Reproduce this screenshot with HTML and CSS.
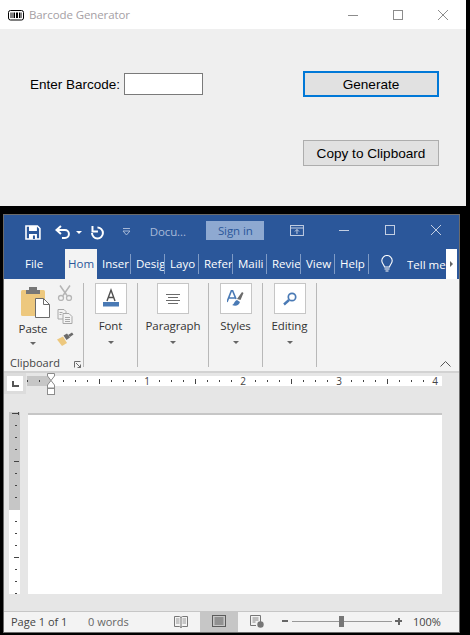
FILE: index.html
```html
<!DOCTYPE html>
<html lang="en">
<head>
<meta charset="utf-8">
<title>Barcode Generator and Word</title>
<link rel="stylesheet" href="styles.css">
</head>
<body>
<section class="form-window">
  <header class="form-title">
    <svg class="form-icon" width="16" height="12" viewBox="0 0 16 12"><rect x="0.5" y="1.5" width="15" height="9.5" rx="2" fill="#fff" stroke="#000"/><path d="M3 3.500v5.500M5 3.500v5.500M6.500 3.500v5.500M8.500 3.500v5.500M9.500 3.500v5.500M11.500 3.500v5.500M13 3.500v5.500" stroke="#000" stroke-width="1"/></svg>
    <span class="form-title-text">Barcode Generator</span>
    <div class="win-controls">
      <span class="win-btn"><svg width="12" height="12" viewBox="0 0 12 12"><path d="M1 6.500h10" stroke="#8c8c8c"/></svg></span>
      <span class="win-btn"><svg width="12" height="12" viewBox="0 0 12 12"><rect x="1.500" y="1.500" width="9" height="9" fill="none" stroke="#8c8c8c"/></svg></span>
      <span class="win-btn"><svg width="12" height="12" viewBox="0 0 12 12"><path d="M1 1l10 10M11 1L1 11" stroke="#8c8c8c"/></svg></span>
    </div>
  </header>
  <div class="form-body">
    <div class="barcode-row">
      <label class="form-label" for="code">Enter Barcode:</label>
      <input class="form-input" id="code" type="text">
    </div>
    <div class="form-buttons">
      <button class="form-btn is-default">Generate</button>
      <button class="form-btn">Copy to Clipboard</button>
    </div>
  </div>
</section>

<section class="word-window">
  <header class="word-title">
    <svg class="qat-save" width="16" height="15" viewBox="0 0 16 15"><path d="M1 1h11.500L15 3.500V14H1z" fill="none" stroke="#fff" stroke-width="1.600"/><rect x="4" y="1" width="8" height="5" fill="#fff"/><rect x="4" y="9" width="8" height="5" fill="#fff"/><rect x="8" y="10.500" width="2" height="3.500" fill="#2b579a"/></svg>
    <svg class="qat-undo" width="16" height="14" viewBox="0 0 16 14"><path d="M6 1L1.500 5 6 9" fill="none" stroke="#fff" stroke-width="2"/><path d="M2 5h8a4 4 0 0 1 0 8H7" fill="none" stroke="#fff" stroke-width="2"/></svg>
    <span class="qat-arrow"></span>
    <svg class="qat-redo" width="15" height="15" viewBox="0 0 15 15"><path d="M7.500 2.500a5.500 5.500 0 1 1-5.500 5.500" fill="none" stroke="#fff" stroke-width="2"/><path d="M2.500 1v5.500H8" fill="none" stroke="#fff" stroke-width="2"/></svg>
    <svg class="qat-custom" width="9" height="8" viewBox="0 0 9 8"><path d="M1 .5h7M1 3l3.500 4L8 3z" fill="none" stroke="#a9bad8"/></svg>
    <span class="doc-name">Docu...</span>
    <span class="sign-in">Sign in</span>
    <svg class="ribbon-display" width="14" height="11" viewBox="0 0 14 11"><rect x=".5" y=".5" width="13" height="10" fill="none" stroke="#c3cfe3"/><path d="M.5 3h13M7 9V4.500M5 6.500l2-2 2 2" fill="none" stroke="#c3cfe3"/></svg>
    <div class="word-controls">
      <span class="word-ctl"><svg width="12" height="12" viewBox="0 0 12 12"><path d="M1 6.500h10" stroke="#c3cfe3"/></svg></span>
      <span class="word-ctl"><svg width="12" height="12" viewBox="0 0 12 12"><rect x="1.500" y="1.500" width="9" height="9" fill="none" stroke="#c3cfe3"/></svg></span>
      <span class="word-ctl"><svg width="12" height="12" viewBox="0 0 12 12"><path d="M1 1l10 10M11 1L1 11" stroke="#c3cfe3"/></svg></span>
    </div>
  </header>

  <nav class="tabs">
    <span class="tab tab-file">File</span>
    <span class="tab tab-home">Hom</span>
    <span class="tab">Inser</span>
    <span class="tab">Desig</span>
    <span class="tab">Layo</span>
    <span class="tab">Refer</span>
    <span class="tab">Maili</span>
    <span class="tab">Revie</span>
    <span class="tab">View</span>
    <span class="tab">Help</span>
    <svg class="bulb" width="12" height="18" viewBox="0 0 12 18"><path d="M3.500 12C3 9.500.8 8.500.8 5.700a5.200 5.200 0 0 1 10.400 0c0 2.800-2.200 3.800-2.700 6.300z" fill="none" stroke="#fff" stroke-width="1.100"/><path d="M3.500 14h5M4.500 16h3" stroke="#fff" stroke-width="1.100"/></svg>
    <span class="tell-me">Tell me</span>
    <span class="tab-scroll"><span class="tab-scroll-arrow"></span></span>
  </nav>

  <div class="ribbon">
    <div class="rgroup rgroup-clip">
      <div class="clip-main">
        <svg class="paste-icon" width="29" height="32" viewBox="0 0 29 32"><rect x="0" y="3" width="24" height="26" rx="1.500" fill="#edc87e"/><rect x="8" y="0" width="8" height="3" fill="#777"/><rect x="5" y="3" width="14" height="4" fill="#777"/><path d="M14.500 11.500h8l6 6v13h-14z" fill="#fff" stroke="#6b6b6b"/><path d="M22.500 11.500v6h6" fill="none" stroke="#6b6b6b"/></svg>
        <span class="rlabel paste-label">Paste</span>
        <span class="drop"></span>
      </div>
      <div class="clip-tools">
        <svg width="16" height="16" viewBox="0 0 16 16"><path d="M3 .5l7 10M13 .5l-7 10" stroke="#b5b5b5" stroke-width="1.500"/><circle cx="4" cy="13" r="2.500" fill="none" stroke="#b5b5b5" stroke-width="1.300"/><circle cx="12" cy="13" r="2.500" fill="none" stroke="#b5b5b5" stroke-width="1.300"/></svg>
        <svg width="16" height="15" viewBox="0 0 16 15"><path d="M1 .5h6l2 2V10H1z" fill="#f3f3f3" stroke="#a8a8a8"/><path d="M6 4.500h6l3 3v7H6z" fill="#f3f3f3" stroke="#a8a8a8"/><path d="M8 8.500h5M8 10.500h5M8 12.500h5M2.500 3.500h3M2.500 5.500h2" stroke="#a8a8a8"/></svg>
        <svg width="17" height="15" viewBox="0 0 17 15"><path d="M0 7.500l6-3 4 6.500-5 3z" fill="#edc87e"/><path d="M6.500 3.500l3 4.500 3.500-2.500-3-4z" fill="#6b6b6b"/><path d="M11 3l4-2.500 1.500 2L13 5z" fill="#6b6b6b"/></svg>
      </div>
      <div class="group-name">
        <span>Clipboard</span>
        <svg width="7" height="7" viewBox="0 0 7 7"><path d="M.5 6.500V.5h6M2 2l4.500 4.500M6.500 3.500v3h-3" fill="none" stroke="#6b6b6b"/></svg>
      </div>
    </div>
    <div class="rgroup rgroup-font">
      <span class="rbox"><svg width="18" height="23" viewBox="0 0 18 23"><path d="M5 14L9 3l4 11M6.300 10.500h5.400" fill="none" stroke="#505050" stroke-width="1.400"/><rect x="1" y="15" width="16" height="4.500" fill="#4a7ab5"/></svg></span>
      <span class="rlabel">Font</span>
      <span class="drop"></span>
    </div>
    <div class="rgroup rgroup-para">
      <span class="rbox"><svg width="14" height="10" viewBox="0 0 14 10"><path d="M0 .5h14M2 3.500h10M0 6.500h14M2 9.500h10" stroke="#6b6b6b"/></svg></span>
      <span class="rlabel">Paragraph</span>
      <span class="drop"></span>
    </div>
    <div class="rgroup rgroup-styles">
      <span class="rbox"><svg width="17" height="17" viewBox="0 0 17 17"><path d="M0 12L4.500 .5h1L9 9M2 8h6" fill="none" stroke="#4a7ab5" stroke-width="1.600"/><path d="M10 9l5-7 1.500 1-3 7z" fill="#6b6b6b"/><path d="M5 15c2 0 2-4 5-5l3 2c-1 3-4 5-8 3z" fill="#4a7ab5"/></svg></span>
      <span class="rlabel">Styles</span>
      <span class="drop"></span>
    </div>
    <div class="rgroup rgroup-edit">
      <span class="rbox"><svg width="14" height="14" viewBox="0 0 14 14"><circle cx="9" cy="5" r="3.700" fill="none" stroke="#4a7ab5" stroke-width="1.700"/><path d="M6 8l-5 4.500" stroke="#4a7ab5" stroke-width="2.400"/></svg></span>
      <span class="rlabel">Editing</span>
      <span class="drop"></span>
    </div>
    <svg class="collapse" width="11" height="6" viewBox="0 0 11 6"><path d="M.5 5.500l5-5 5 5" fill="none" stroke="#555"/></svg>
  </div>

  <div class="ruler-row">
    <span class="tab-stop"><svg width="7" height="6" viewBox="0 0 7 6"><path d="M1 0v5h6" fill="none" stroke="#555" stroke-width="2"/></svg></span>
    <svg class="h-ruler" width="415" height="21" viewBox="0 0 415 21">
      <rect y="0" width="415" height="10" fill="#fff"/>
      <rect y="0" width="24" height="10" fill="#c6c6c6"/>
      <g fill="#444"><rect x="0" y="4" width="1" height="2"/><rect x="12" y="4" width="1" height="2"/>
      <rect x="36" y="4" width="1" height="2"/><rect x="48" y="4" width="1" height="2"/><rect x="60" y="4" width="1" height="2"/><rect x="72" y="3" width="1" height="5"/><rect x="84" y="4" width="1" height="2"/><rect x="96" y="4" width="1" height="2"/><rect x="108" y="4" width="1" height="2"/>
      <rect x="132" y="4" width="1" height="2"/><rect x="144" y="4" width="1" height="2"/><rect x="156" y="4" width="1" height="2"/><rect x="168" y="3" width="1" height="5"/><rect x="180" y="4" width="1" height="2"/><rect x="192" y="4" width="1" height="2"/><rect x="204" y="4" width="1" height="2"/>
      <rect x="228" y="4" width="1" height="2"/><rect x="240" y="4" width="1" height="2"/><rect x="252" y="4" width="1" height="2"/><rect x="264" y="3" width="1" height="5"/><rect x="276" y="4" width="1" height="2"/><rect x="288" y="4" width="1" height="2"/><rect x="300" y="4" width="1" height="2"/>
      <rect x="324" y="4" width="1" height="2"/><rect x="336" y="4" width="1" height="2"/><rect x="348" y="4" width="1" height="2"/><rect x="360" y="3" width="1" height="5"/><rect x="372" y="4" width="1" height="2"/><rect x="384" y="4" width="1" height="2"/><rect x="396" y="4" width="1" height="2"/></g>
      <g class="ruler-num"><text x="120" y="9" text-anchor="middle">1</text><text x="216" y="9" text-anchor="middle">2</text><text x="312" y="9" text-anchor="middle">3</text><text x="408" y="9" text-anchor="middle">4</text></g>
      <path d="M20.500 -2.500h7v2.500l-3.500 4.500 3.500 4.500v3h-7v-3l3.500-4.500-3.500-4.500z" fill="#fff" stroke="#8c8c8c"/>
      <rect x="20.500" y="12.500" width="7" height="6" fill="#fff" stroke="#8c8c8c"/>
    </svg>
  </div>

  <div class="doc-row">
    <svg class="v-ruler" width="11" height="182" viewBox="0 0 11 182">
      <rect width="11" height="182" fill="#fff"/>
      <rect width="11" height="98" fill="#c6c6c6"/>
      <g fill="#444"><rect x="3" y="1" width="6" height="1"/><rect x="9" y="0" width="1" height="3"/>
      <rect x="6" y="13" width="2" height="1"/><rect x="6" y="25" width="2" height="1"/><rect x="6" y="37" width="2" height="1"/><rect x="5" y="49" width="5" height="1"/><rect x="6" y="61" width="2" height="1"/><rect x="6" y="73" width="2" height="1"/><rect x="6" y="85" width="2" height="1"/>
      <rect x="6" y="109" width="2" height="1"/><rect x="6" y="121" width="2" height="1"/><rect x="6" y="133" width="2" height="1"/><rect x="5" y="145" width="5" height="1"/><rect x="6" y="157" width="2" height="1"/><rect x="6" y="169" width="2" height="1"/><rect x="6" y="181" width="2" height="1"/></g>
    </svg>
    <div class="page"></div>
  </div>

  <footer class="status">
    <span class="st-page">Page 1 of 1</span>
    <span class="st-words">0 words</span>
    <svg class="st-read" width="14" height="13" viewBox="0 0 14 13"><path d="M.5 1.500h5l1.500 1 1.500-1h5v10h-5l-1.500 1-1.500-1h-5zM7 2.500v10" fill="none" stroke="#777"/><path d="M2 4h3.500M2 6h3.500M2 8h3.500M8.500 4H12M8.500 6H12M8.500 8H12" stroke="#999"/></svg>
    <span class="st-print"><svg width="14" height="12" viewBox="0 0 14 12"><rect x=".5" y=".5" width="13" height="11" fill="none" stroke="#5c5c5c"/><path d="M2.500 3h9M2.500 5h9M2.500 7h9M2.500 9h9" stroke="#5c5c5c"/></svg></span>
    <svg class="st-web" width="14" height="13" viewBox="0 0 14 13"><path d="M.5 .5h10V7M.5 .5v10H6" fill="none" stroke="#777"/><path d="M2.500 3h6M2.500 5h6M2.500 7h3" stroke="#888"/><circle cx="10.500" cy="9.500" r="3.200" fill="#777"/></svg>
    <span class="zoom-minus"></span>
    <span class="zoom-track"><span class="zoom-thumb"></span></span>
    <span class="zoom-plus"></span>
    <span class="zoom-pct">100%</span>
  </footer>
</section>
</body>
</html>
```

FILE: styles.css
```css
* { box-sizing: border-box; }
html, body { margin: 0; padding: 0; }
body { width: 470px; height: 635px; background: #000; overflow: hidden; display: flex; flex-direction: column; align-items: flex-start; }

/* Barcode form window */
.form-window { width: 466px; height: 206px; background: #efefef; display: flex; flex-direction: column; }
.form-title { height: 29px; background: #fff; display: flex; align-items: center; padding-left: 8px; }
.form-title-text { margin-left: 5px; font: 11.5px "Open Sans", sans-serif; letter-spacing: -.1px; color: #a5a0a5; }
.win-controls { margin-left: auto; display: flex; padding-right: 1px; }
.win-btn { width: 45px; height: 29px; display: flex; align-items: center; justify-content: center; }
.form-body { flex: 1; display: flex; justify-content: space-between; align-items: flex-start; padding: 42px 27px 0 30px; }
.barcode-row { display: flex; align-items: center; height: 26px; gap: 6px; }
.form-label { width: 88px; white-space: nowrap; font: 13.5px "Liberation Sans", sans-serif; color: #000; }
.form-input { width: 79px; height: 22px; background: #fff; border: 1px solid #7a7a7a; padding: 0; margin: 0; }
.form-buttons { display: flex; flex-direction: column; gap: 43px; }
.form-btn { width: 136px; height: 26px; padding: 0; margin: 0; background: #e1e1e1; border: 1px solid #adadad; font: 13.6px "Liberation Sans", sans-serif; color: #000; }
.form-btn.is-default { border: 2px solid #0078d7; }

/* Word window */
.word-window { width: 457px; height: 419px; margin: 8px 0 0 3px; border: 1px solid #6b6b6b; background: #e6e6e6; display: flex; flex-direction: column; }
.word-title { height: 34px; flex: none; background: #2b579a; display: flex; align-items: center; }
.qat-save { margin-left: 21px; }
.qat-undo { margin-left: 14px; }
.qat-arrow { margin-left: 5px; width: 0; height: 0; border: 3px solid transparent; border-top: 3px solid #fff; border-bottom: 0; }
.qat-redo { margin-left: 8px; }
.qat-custom { margin-left: 17px; }
.doc-name { margin: 0 0 2px 19px; width: 38px; font: 11.5px "Open Sans", sans-serif; letter-spacing: -.1px; color: #a9bad8; }
.sign-in { align-self: flex-start; margin: 6px 0 0 19px; width: 58px; height: 19px; background: #8ea9d1; color: #2b579a; font: 11.5px/19px "Open Sans", sans-serif; letter-spacing: -.1px; text-align: center; }
.ribbon-display { margin: 0 0 3px 26px; }
.word-controls { display: flex; margin-left: 17px; align-self: flex-start; }
.word-ctl { width: 46px; height: 30px; display: flex; align-items: center; justify-content: center; }

.tabs { height: 30px; flex: none; background: #2b579a; display: flex; align-items: center; }
.tab { width: 34px; height: 20px; flex: none; overflow: hidden; white-space: nowrap; font: 11.5px/20px "Open Sans", sans-serif; color: #fff; padding-left: 5px; border-right: 1px solid #7f9bc6; }
.tab-file { width: 61px; padding-left: 21px; border-right: 0; }
.tab-home { width: 32px; height: 30px; background: #f3f3f3; color: #2b579a; line-height: 30px; padding-left: 3px; border-right: 0; }
.bulb { margin-left: 12px; flex: none; }
.tell-me { margin-left: 14px; width: 39px; overflow: hidden; white-space: nowrap; font: 11.5px "Open Sans", sans-serif; color: #fff; flex: none; }
.tab-scroll { width: 11px; height: 30px; background: #fff; display: flex; align-items: center; justify-content: center; flex: none; }
.tab-scroll-arrow { width: 0; height: 0; border: 3px solid transparent; border-left: 3px solid #666; border-right: 0; }

.ribbon { height: 94px; flex: none; background: #f3f3f3; border-bottom: 2px solid #d2d2d2; display: flex; position: relative; padding-top: 4px; }
.rgroup { height: 84px; flex: none; border-right: 1px solid #b8b8b8; display: flex; flex-direction: column; align-items: center; }
.rgroup-clip { width: 80px; display: block; position: relative; }
.rgroup-font { width: 54px; }
.rgroup-para { width: 71px; }
.rgroup-styles { width: 54px; }
.rgroup-edit { width: 54px; }
.rbox { width: 32px; height: 31px; flex: none; background: #fff; border: 1px solid #c6c6c6; display: flex; align-items: center; justify-content: center; }
.rlabel { font: 11.5px/16px "Open Sans", sans-serif; letter-spacing: -.1px; color: #333; margin-top: 4px; white-space: nowrap; }
.drop { width: 0; height: 0; margin-top: 7px; border: 3px solid transparent; border-top: 3px solid #666; border-bottom: 0; }
.clip-main { width: 50px; margin-left: 6px; display: flex; flex-direction: column; align-items: center; }
.paste-icon { margin-top: 4px; }
.paste-label { margin: 2px 4px 0 0; }
.clip-main .drop { margin: 5px 5px 0 0; }
.clip-tools { position: absolute; left: 53px; top: 2px; display: flex; flex-direction: column; gap: 8px; }
.group-name { position: absolute; left: 6px; right: 2px; top: 73px; display: flex; justify-content: space-between; align-items: center; font: 11px/14px "Open Sans", sans-serif; color: #444; }
.group-name svg { margin-top: 3px; }
.collapse { position: absolute; right: 8px; bottom: 4px; }

.ruler-row { height: 39px; flex: none; position: relative; padding: 3px 0 0 23px; }
.tab-stop { position: absolute; left: 0; top: 0; width: 22px; height: 21px; background: #fff; border: 3px solid #dcdcdc; display: flex; align-items: center; justify-content: center; }
.h-ruler { display: block; overflow: visible; }
.ruler-num text { font: 10px "Open Sans", sans-serif; fill: #444; }

.doc-row { flex: 1; display: flex; align-items: flex-start; padding-left: 5px; min-height: 0; }
.v-ruler { flex: none; }
.page { width: 414px; height: 181px; margin: 1px 0 0 8px; background: #fff; border-top: 2px solid #c6c6c6; }

.status { height: 21px; flex: none; background: #f3f3f3; border-top: 1px solid #c6c6c6; padding-bottom: 2px; display: flex; align-items: center; font: 11px "Open Sans", sans-serif; color: #444; }
.st-page { margin-left: 7px; width: 77px; }
.st-words { width: 86px; color: #666; }
.st-read { flex: none; }
.st-print { align-self: flex-start; width: 38px; height: 20px; background: #c6c6c6; margin-left: 12px; padding-bottom: 2px; display: flex; align-items: center; justify-content: center; }
.st-web { margin-left: 12px; flex: none; }
.zoom-minus { margin-left: 18px; width: 6px; height: 2px; background: #666; }
.zoom-track { margin-left: 4px; width: 100px; height: 1px; background: #999; position: relative; }
.zoom-thumb { position: absolute; left: 47px; top: -5px; width: 5px; height: 11px; background: #777; }
.zoom-plus { margin-left: 3px; width: 7px; height: 7px; background: linear-gradient(#666, #666) center / 7px 2px no-repeat, linear-gradient(#666, #666) center / 2px 7px no-repeat; }
.zoom-pct { margin-left: 11px; }
```
